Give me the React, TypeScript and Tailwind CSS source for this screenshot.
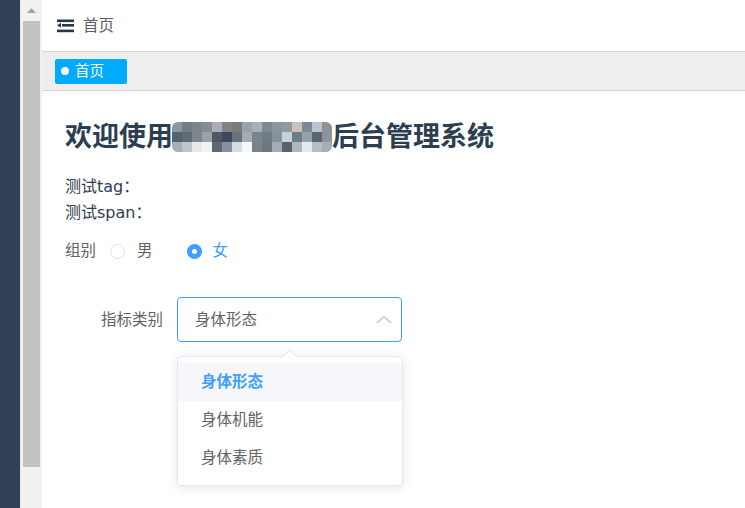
import React from "react";

const mosaic: string[][] = [
  ["#8a96a0", "#6f7d88", "#7a858e", "#8c8c8c", "#a7aeb5", "#7e848a", "#7a7a7a", "#98a3ae", "#a5b0bc", "#7f8a8f", "#8d969c", "#8e9aa4", "#c9c3bc", "#7b8a96", "#b9c6d2", "#8b9399"],
  ["#56636e", "#5f6b74", "#7c8792", "#9aa3ab", "#4e5866", "#3e4858", "#66727e", "#a4adb6", "#7a848d", "#6f7a85", "#8492a0", "#c8d2dc", "#6e7c88", "#98a1aa", "#5c6670", "#8a949c"],
  ["#a7aeb4", "#c0c5ca", "#e6e9ec", "#f0f2f4", "#5f6870", "#8391a0", "#d5dde4", "#f6f7f8", "#7c8388", "#6d7780", "#a3acb5", "#58626d", "#b0b6bc", "#e7eaed", "#b5bcc2", "#a6adb3"],
];

const font = { fontFamily: '"Liberation Sans", "Noto Sans CJK SC", sans-serif' };

export default function App() {
  return (
    <div
      className="flex h-[508px] w-[745px] overflow-hidden bg-white"
      style={font}
    >
      {/* dark sidebar */}
      <div className="w-[20px] shrink-0 bg-[#304156]" />
      {/* scrollbar */}
      <div className="flex w-[22px] shrink-0 flex-col items-center border-l border-[#e6e6e6] bg-[#f1f1f1]">
        <div className="flex h-[21px] w-full items-center justify-center">
          <svg width="9" height="6" viewBox="0 0 9 6">
            <polygon points="4.5,0 9,5 0,5" fill="#a3a3a3" />
          </svg>
        </div>
        <div className="h-[446px] w-[17px] bg-[#c1c1c1]" />
      </div>
      {/* main */}
      <div className="flex min-w-0 flex-1 flex-col">
        {/* header */}
        <div className="flex h-[52px] shrink-0 items-center border-b border-[#d6d6d6] pl-[15px]">
          <svg width="17" height="14" viewBox="0 0 17 14" className="mt-[1px]">
            <rect x="0" y="0.5" width="17" height="2.6" fill="#2c3645" />
            <polygon points="0,6.3 4,3.8 4,8.8" fill="#2c3645" />
            <rect x="5" y="5" width="12" height="2.6" fill="#2c3645" />
            <rect x="0" y="10.6" width="17" height="2.6" fill="#2c3645" />
          </svg>
          <span className="ml-[9px] text-[15.5px] text-[#5a5e66]">首页</span>
        </div>
        {/* tags bar */}
        <div className="flex h-[39px] shrink-0 items-center border-b border-[#d6d6d6] bg-[#eeeeee] pl-[13px]">
          <div className="flex h-[25px] w-[72px] items-center rounded-[2px] bg-[#00aaff] pl-[6px] text-white">
            <span className="h-[8px] w-[8px] rounded-full bg-white" />
            <span className="ml-[6px] text-[14.5px] leading-none">首页</span>
          </div>
        </div>
        {/* content */}
        <div className="pl-[23px] pt-[30px]">
          <div className="flex h-[32px] items-center text-[27px] font-bold text-[#2c3e50]">
            <span>欢迎使用</span>
            <div className="ml-[-1px] flex flex-col overflow-hidden rounded-[6px]">
              {mosaic.map((row, i) => (
                <div key={i} className="flex">
                  {row.map((c, j) => (
                    <div key={j} className="h-[10px] w-[10px]" style={{ backgroundColor: c }} />
                  ))}
                </div>
              ))}
            </div>
            <span>后台管理系统</span>
          </div>
          <div
            className="mt-[21px] text-[16px] leading-[26px] text-[#2c3e50]"
            style={{ fontFamily: '"DejaVu Sans", "Noto Sans CJK SC", sans-serif' }}
          >
            <div>测试tag：</div>
            <div>测试span：</div>
          </div>
          <div className="mt-[13px] flex h-[24px] items-center text-[15.5px] text-[#606266]">
            <span>组别</span>
            <span className="ml-[14px] h-[15px] w-[15px] rounded-full border border-[#dcdfe6] bg-white" />
            <span className="ml-[12px]">男</span>
            <span className="ml-[34px] flex h-[15px] w-[15px] items-center justify-center rounded-full bg-[#409eff]">
              <span className="h-[5px] w-[5px] rounded-full bg-white" />
            </span>
            <span className="ml-[11px] text-[#409eff]">女</span>
          </div>
          <div className="mt-[34px] flex items-center">
            <div className="w-[112px] pr-[14px] text-right text-[15.5px] text-[#606266]">指标类别</div>
            <div className="relative">
              <div className="flex h-[45px] w-[225px] items-center justify-between rounded-[4px] border border-[#409eff] pl-[17px] pr-[9px] text-[15.5px] text-[#606266]">
                <span>身体形态</span>
                <svg width="16" height="9" viewBox="0 0 16 9">
                  <polyline points="1,8 8,1.5 15,8" fill="none" stroke="#c0c4cc" strokeWidth="1.3" />
                </svg>
              </div>
              <div className="absolute left-0 top-[59px] z-10 w-[226px] rounded-[4px] border border-[#e4e7ed] bg-white pb-[8px] pt-[6px] shadow-[0_2px_12px_rgba(0,0,0,0.1)]">
                <div className="absolute left-[107px] top-[-6px] h-[10px] w-[10px] rotate-45 border-l border-t border-[#e4e7ed] bg-white" />
                <div className="relative flex h-[38px] items-center bg-[#f5f7fa] pl-[23px] text-[15.5px] font-bold text-[#409eff]">身体形态</div>
                <div className="relative flex h-[38px] items-center pl-[23px] text-[15.5px] text-[#606266]">身体机能</div>
                <div className="relative flex h-[38px] items-center pl-[23px] text-[15.5px] text-[#606266]">身体素质</div>
              </div>
            </div>
          </div>
        </div>
      </div>
    </div>
  );
}
